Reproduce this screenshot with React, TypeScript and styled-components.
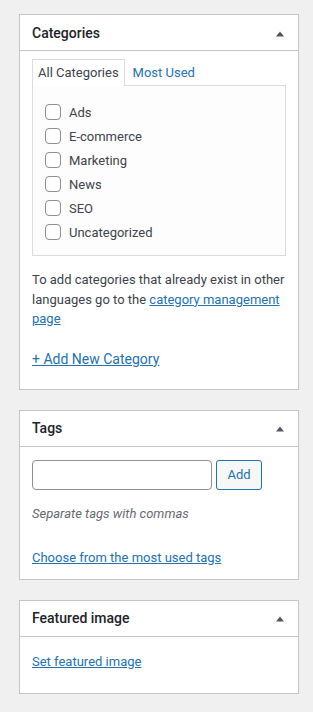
import React from "react";
import styled, { createGlobalStyle } from "styled-components";

const GlobalStyle = createGlobalStyle`
  body {
    margin: 0;
    background: #f0f0f1;
    font-family: Roboto, "Noto Sans", sans-serif;
    font-size: 13px;
    color: #3c434a;
  }
`;

const categories = ["Ads", "E-commerce", "Marketing", "News", "SEO", "Uncategorized"];

const ArrowUp: React.FC = () => (
  <svg width="10" height="6" viewBox="0 0 10 6">
    <polygon points="1,5.5 5,0.5 9,5.5" fill="#50575e" />
  </svg>
);

const App: React.FC = () => {
  return (
    <Page>
      <GlobalStyle />
      <PostBox>
        <Header>
          <Title>Categories</Title>
          <ArrowUp />
        </Header>
        <Inside pb={19}>
          <Tabs>
            <Tab active>All Categories</Tab>
            <Tab>Most Used</Tab>
          </Tabs>
          <TabPanel>
            {categories.map((c) => (
              <CheckRow key={c}>
                <Checkbox type="checkbox" />
                <span>{c}</span>
              </CheckRow>
            ))}
          </TabPanel>
          <Note>
            To add categories that already exist in other languages go to the{" "}
            <Link href="#">category management page</Link>
          </Note>
          <AddLink>
            <Link href="#">+ Add New Category</Link>
          </AddLink>
        </Inside>
      </PostBox>

      <PostBox>
        <Header>
          <Title>Tags</Title>
          <ArrowUp />
        </Header>
        <Inside pb={11}>
          <TagRow>
            <TagInput type="text" />
            <AddButton>Add</AddButton>
          </TagRow>
          <Hint>Separate tags with commas</Hint>
          <TagCloudLink>
            <Link href="#">Choose from the most used tags</Link>
          </TagCloudLink>
        </Inside>
      </PostBox>

      <PostBox>
        <Header>
          <Title>Featured image</Title>
          <ArrowUp />
        </Header>
        <FeaturedInside>
          <Link href="#">Set featured image</Link>
        </FeaturedInside>
      </PostBox>
    </Page>
  );
};

export default App;

const Page = styled.div`
  padding: 14px 14px 1px 19px;
  width: 280px;
`;

const PostBox = styled.div`
  background: #fff;
  border: 1px solid #c3c4c7;
  margin-bottom: 20px;
`;

const Header = styled.div`
  box-sizing: border-box;
  height: 36px;
  display: flex;
  align-items: center;
  justify-content: space-between;
  padding: 2px 13px 0 12px;
  border-bottom: 1px solid #c3c4c7;
`;

const Title = styled.h2`
  margin: 0;
  font-size: 14px;
  font-weight: 500;
  color: #1d2327;
  line-height: 1.4;
`;

const Inside = styled.div<{ pb: number }>`
  padding: 8px 12px ${(p) => p.pb}px;
`;

const Tabs = styled.div`
  display: flex;
  gap: 2px;
`;

const Tab = styled.div<{ active?: boolean }>`
  padding: 3px 5px 4px;
  line-height: 19px;
  border: 1px solid ${(p) => (p.active ? "#dcdcde" : "transparent")};
  border-bottom: none;
  background: ${(p) => (p.active ? "#fff" : "transparent")};
  color: ${(p) => (p.active ? "#3c434a" : "#2271b1")};
  margin-bottom: -1px;
  position: relative;
  z-index: 1;
`;

const TabPanel = styled.div`
  border: 1px solid #dcdcde;
  background: #fdfdfd;
  padding: 14px 12px 11px;
`;

const CheckRow = styled.label`
  display: flex;
  align-items: center;
  gap: 8px;
  height: 24px;
`;

const Checkbox = styled.input`
  appearance: none;
  margin: 0;
  width: 16px;
  height: 16px;
  border: 1px solid #8c8f94;
  border-radius: 4px;
  background: #fff;
`;

const Note = styled.p`
  margin: 14px 0 0;
  line-height: 1.5;
`;

const AddLink = styled.p`
  margin: 20px 0 0;
  font-size: 14px;
  line-height: 1.5;
`;

const Link = styled.a`
  color: #2271b1;
  text-decoration: underline;
`;

const TagRow = styled.div`
  display: flex;
  gap: 4px;
  margin-top: 5px;
`;

const TagInput = styled.input`
  box-sizing: border-box;
  width: 180px;
  height: 30px;
  margin: 0;
  border: 1px solid #8c8f94;
  border-radius: 4px;
  background: #fff;
`;

const AddButton = styled.button`
  box-sizing: border-box;
  width: 46px;
  height: 30px;
  border: 1px solid #2271b1;
  border-radius: 3px;
  background: #f6f7f7;
  color: #2271b1;
  font-family: inherit;
  font-size: 13px;
  padding: 0;
`;

const Hint = styled.p`
  margin: 14px 0 0;
  font-style: italic;
  color: #646970;
  line-height: 1.5;
`;

const TagCloudLink = styled.p`
  margin: 25px 0 0;
  line-height: 1.5;
`;

const FeaturedInside = styled.div`
  padding: 15px 12px 22px;
  line-height: 1.5;
`;
